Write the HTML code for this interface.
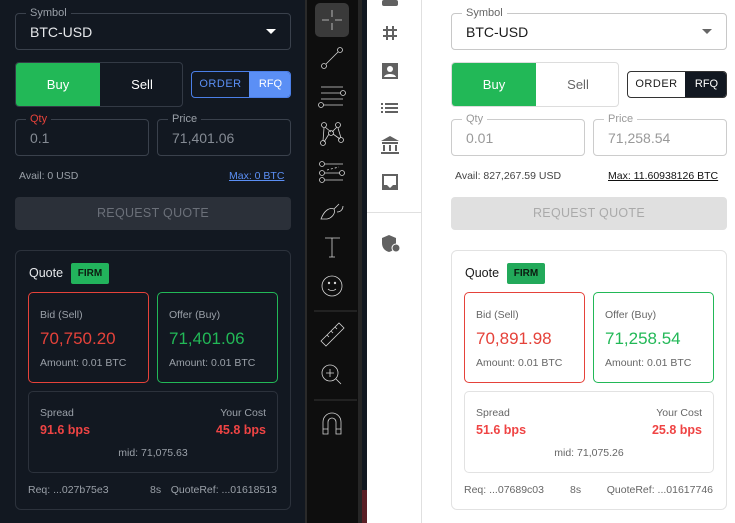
<!DOCTYPE html>
<html><head><meta charset="utf-8"><style>
*{box-sizing:border-box;margin:0;padding:0}
body{width:735px;height:523px;overflow:hidden;position:relative;font-family:"Liberation Sans",sans-serif;background:#fff}
.a{position:absolute}
.dk{left:0;top:0;width:305px;height:523px;background:#121821}
.fs{position:absolute;border-radius:4px}
.lg{position:absolute;font-size:11px;padding:0 4px;top:-7px;left:10px;line-height:13px}
.t{position:absolute;white-space:nowrap}
.s{font-size:10.5px}
</style></head><body>
<div class="a dk"></div>
<div class="fs" style="left:15px;top:13px;width:276px;height:37px;border:1px solid #3a414c"><span class="lg" style="background:#121821;color:#9aa0a8">Symbol</span><span class="t" style="left:14px;top:10px;font-size:14px;color:#e6e8eb">BTC-USD</span><span class="t" style="right:14px;top:15px;width:0;height:0;border-left:5px solid transparent;border-right:5px solid transparent;border-top:5px solid #fff"></span></div>
<div class="fs" style="left:15px;top:62px;width:168px;height:45px;border:1px solid #333a45;overflow:hidden"><div class="a" style="left:0;top:0;width:84px;height:45px;background:#22b857;color:#fff;font-size:13px;text-align:center;line-height:43px">Buy</div><div class="a" style="left:84px;top:0;width:84px;color:#fff;font-size:13px;text-align:center;line-height:43px">Sell</div></div>
<div class="fs" style="left:191px;top:71px;width:100px;height:27px;border:1px solid #4b7fe8;overflow:hidden"><div class="a" style="left:0;width:57px;line-height:25px;text-align:center;color:#5b8ff5;font-size:11px;letter-spacing:.5px">ORDER</div><div class="a" style="left:57px;width:43px;height:27px;background:#5b8ff5;line-height:25px;text-align:center;color:#fff;font-size:11px">RFQ</div></div>
<div class="fs" style="left:15px;top:119px;width:134px;height:37px;border:1px solid #3a414c"><span class="lg" style="background:#121821;color:#e5423a">Qty</span><span class="t" style="left:14px;top:10px;font-size:14px;color:#858b94">0.1</span></div>
<div class="fs" style="left:157px;top:119px;width:134px;height:37px;border:1px solid #3a414c"><span class="lg" style="background:#121821;color:#9aa0a8">Price</span><span class="t" style="left:14px;top:10px;font-size:14px;color:#858b94">71,401.06</span></div>
<span class="t s" style="left:19px;top:170px;color:#9aa0a8">Avail: 0 USD</span>
<span class="t s" style="left:229px;top:170px;color:#5b8ff5;text-decoration:underline">Max: 0 BTC</span>
<div class="fs" style="left:15px;top:197px;width:276px;height:33px;background:#2b3039;color:#6b7079;font-size:12.5px;text-align:center;line-height:33px;letter-spacing:.3px">REQUEST QUOTE</div>
<div class="fs" style="left:15px;top:250px;width:276px;height:260px;border:1px solid #2c323c;border-radius:6px">
 <span class="t" style="left:13px;top:15px;font-size:12.5px;color:#e6e8eb">Quote</span>
 <span class="t" style="left:55px;top:12px;width:38px;height:21px;background:#22b35c;color:#0c1a10;font-size:10px;font-weight:bold;text-align:center;line-height:21px;border-radius:2px">FIRM</span>
 <div class="fs" style="left:12px;top:41px;width:121px;height:91px;border:1px solid #e5423a;border-radius:5px"><span class="t s" style="left:11px;top:16px;color:#9aa0a8">Bid (Sell)</span><span class="t" style="left:11px;top:36px;font-size:17px;color:#e5423a">70,750.20</span><span class="t s" style="left:11px;top:64px;color:#9aa0a8">Amount: 0.01 BTC</span></div>
 <div class="fs" style="left:141px;top:41px;width:121px;height:91px;border:1px solid #22b857;border-radius:5px"><span class="t s" style="left:11px;top:16px;color:#9aa0a8">Offer (Buy)</span><span class="t" style="left:11px;top:36px;font-size:17px;color:#22b857">71,401.06</span><span class="t s" style="left:11px;top:64px;color:#9aa0a8">Amount: 0.01 BTC</span></div>
 <div class="fs" style="left:12px;top:140px;width:250px;height:82px;border:1px solid #2c323c;border-radius:5px"><span class="t s" style="left:11px;top:15px;color:#9aa0a8">Spread</span><span class="t s" style="right:11px;top:15px;color:#9aa0a8">Your Cost</span><span class="t" style="left:11px;top:31px;font-size:12.5px;font-weight:bold;color:#ef4444">91.6 bps</span><span class="t" style="right:11px;top:31px;font-size:12.5px;font-weight:bold;color:#ef4444">45.8 bps</span><span class="t s" style="left:0;width:248px;text-align:center;top:55px;color:#9aa0a8">mid: 71,075.63</span></div>
 <span class="t s" style="left:12px;top:233px;color:#9aa0a8">Req: ...027b75e3</span><span class="t s" style="left:134px;top:233px;color:#9aa0a8">8s</span><span class="t s" style="right:13px;top:233px;color:#9aa0a8">QuoteRef: ...01618513</span>
</div>
<div class="a" style="left:305px;top:0;width:2px;height:523px;background:#2a2a2a"></div>
<div class="a" style="left:307px;top:0;width:51px;height:523px;background:#0e0e0e"></div>
<div class="a" style="left:358px;top:0;width:4px;height:523px;background:#262626"></div>
<div class="a" style="left:362px;top:0;width:5px;height:523px;background:#121821"></div>
<div class="a" style="left:362px;top:490px;width:5px;height:33px;background:#5a1f25"></div>
<svg class="a" style="left:307px;top:0" width="51" height="523" fill="none" stroke="#d4d4d4" stroke-width="0.8">
<rect x="8" y="3" width="34" height="34" rx="5" fill="#3a3a3a" stroke="none"/>
<path d="M25 10v7M25 23v7M15 20h7M28 20h7"/>
<circle cx="17" cy="66" r="2.5"/><circle cx="33" cy="50" r="2.5"/><path d="M19 64l12-12"/>
<path d="M14 87h22M14 93h22M14 99h22M14 105h22"/><circle cx="36" cy="93" r="2.5" fill="#0e0e0e"/><circle cx="14" cy="105" r="2.5" fill="#0e0e0e"/>
<circle cx="17" cy="125" r="2.5"/><circle cx="31" cy="125" r="2.5"/><circle cx="24" cy="133" r="2.5"/><circle cx="16" cy="143" r="2.5"/><circle cx="34" cy="140" r="2.5"/><path d="M17 128l-1 13M18 127l6 5M30 127l-5 5M26 134l7 5M22 134l-5 8M31 128l3 10"/>
<circle cx="15" cy="164" r="2.5"/><circle cx="15" cy="173" r="2.5"/><circle cx="15" cy="180" r="2.5"/><circle cx="35" cy="173" r="2.5"/><path d="M18 164h18M18 180h18M18 173h15"/><path d="M20 170l12-3" stroke-dasharray="2 2"/>
<path d="M14 219c3-8 8-12 13-10c2 4-2 9-7 10zM27 209l5-5M30 212c4 0 6-3 6-6"/>
<path d="M18 238h15M25 238v19M22 257h6"/>
<circle cx="25" cy="286" r="10"/><circle cx="22" cy="283" r=".8" fill="#ddd"/><circle cx="28" cy="283" r=".8" fill="#ddd"/><path d="M21 289c2 2 6 2 8 0"/>
<path d="M7 311h43" stroke="#444"/>
<path d="M14 341l18-18l5 5l-18 18zM20 335l2 2M24 331l2 2M28 327l2 2"/>
<circle cx="23" cy="373" r="8"/><path d="M29 379l5 5M23 369v8M19 373h8"/>
<path d="M7 400h43" stroke="#444"/>
<path d="M16 434v-12a9 9 0 0 1 18 0v12h-5v-12a4 4 0 0 0-8 0v12zM16 429h5M29 429h5"/>
</svg>
<div class="a" style="left:367px;top:0;width:55px;height:523px;background:#fff;border-right:1px solid #e0e0e0"></div>
<div class="a" style="left:367px;top:212px;width:55px;height:1px;background:#e0e0e0"></div>
<svg class="a" style="left:367px;top:0" width="55" height="523" fill="#616161">
<rect x="15" y="0" width="16" height="6" rx="2"/>
<path d="M16 30h14M16 36h14M20 26v14M26 26v14" stroke="#616161" stroke-width="2" fill="none"/>
<path d="M15 63h16v16h-16z"/><circle cx="23" cy="69" r="3" fill="#fff"/><path d="M17 77c1-4 11-4 12 0z" fill="#fff"/>
<path d="M14 103h2v2h-2zM14 107h2v2h-2zM14 111h2v2h-2zM18 103h13v2h-13zM18 107h13v2h-13zM18 111h13v2h-13z"/>
<path d="M14 141l9-5 9 5zM15 142h16v2h-16zM16 145h2v6h-2zM22 145h2v6h-2zM28 145h2v6h-2zM14 152h18v2h-18z"/>
<path d="M15 174h16v16h-16z"/><path d="M17 176h12v9h-3l-3 3-3-3h-3z" fill="#fff"/>
<path d="M15 238l7-3 7 3v5c0 5-3 8-7 9c-4-1-7-4-7-9z"/><circle cx="29" cy="248" r="4" stroke="#fff" stroke-width="1"/>
</svg>
<div class="fs" style="left:451px;top:13px;width:276px;height:37px;border:1px solid #c8c8c8"><span class="lg" style="background:#fff;color:#666">Symbol</span><span class="t" style="left:14px;top:10px;font-size:14px;color:#1a1a1a">BTC-USD</span><span class="t" style="right:14px;top:15px;width:0;height:0;border-left:5px solid transparent;border-right:5px solid transparent;border-top:5px solid #666"></span></div>
<div class="fs" style="left:451px;top:62px;width:168px;height:45px;border:1px solid #ddd;overflow:hidden"><div class="a" style="left:0;top:0;width:84px;height:45px;background:#22b857;color:#fff;font-size:13px;text-align:center;line-height:43px">Buy</div><div class="a" style="left:84px;top:0;width:84px;color:#666;font-size:13px;text-align:center;line-height:43px">Sell</div></div>
<div class="fs" style="left:627px;top:71px;width:100px;height:27px;border:1px solid #333;overflow:hidden"><div class="a" style="left:0;width:57px;line-height:25px;text-align:center;color:#1a1a1a;font-size:11px;letter-spacing:.5px">ORDER</div><div class="a" style="left:57px;width:43px;height:27px;background:#121821;line-height:25px;text-align:center;color:#fff;font-size:11px">RFQ</div></div>
<div class="fs" style="left:451px;top:119px;width:134px;height:37px;border:1px solid #ccc"><span class="lg" style="background:#fff;color:#999">Qty</span><span class="t" style="left:14px;top:10px;font-size:14px;color:#999">0.01</span></div>
<div class="fs" style="left:593px;top:119px;width:134px;height:37px;border:1px solid #ccc"><span class="lg" style="background:#fff;color:#999">Price</span><span class="t" style="left:14px;top:10px;font-size:14px;color:#999">71,258.54</span></div>
<span class="t s" style="left:455px;top:170px;color:#444">Avail: 827,267.59 USD</span>
<span class="t s" style="left:608px;top:170px;color:#111;text-decoration:underline">Max: 11.60938126 BTC</span>
<div class="fs" style="left:451px;top:197px;width:276px;height:33px;background:#e0e0e0;color:#aaa;font-size:12.5px;text-align:center;line-height:33px;letter-spacing:.3px">REQUEST QUOTE</div>
<div class="fs" style="left:451px;top:250px;width:276px;height:260px;border:1px solid #e2e2e2;border-radius:6px">
 <span class="t" style="left:13px;top:15px;font-size:12.5px;color:#1a1a1a">Quote</span>
 <span class="t" style="left:55px;top:12px;width:38px;height:21px;background:#22a95a;color:#0c1a10;font-size:10px;font-weight:bold;text-align:center;line-height:21px;border-radius:2px">FIRM</span>
 <div class="fs" style="left:12px;top:41px;width:121px;height:91px;border:1px solid #e5423a;border-radius:5px"><span class="t s" style="left:11px;top:16px;color:#666">Bid (Sell)</span><span class="t" style="left:11px;top:36px;font-size:17px;color:#e5423a">70,891.98</span><span class="t s" style="left:11px;top:64px;color:#666">Amount: 0.01 BTC</span></div>
 <div class="fs" style="left:141px;top:41px;width:121px;height:91px;border:1px solid #22b857;border-radius:5px"><span class="t s" style="left:11px;top:16px;color:#666">Offer (Buy)</span><span class="t" style="left:11px;top:36px;font-size:17px;color:#22b857">71,258.54</span><span class="t s" style="left:11px;top:64px;color:#666">Amount: 0.01 BTC</span></div>
 <div class="fs" style="left:12px;top:140px;width:250px;height:82px;border:1px solid #e2e2e2;border-radius:5px"><span class="t s" style="left:11px;top:15px;color:#666">Spread</span><span class="t s" style="right:11px;top:15px;color:#666">Your Cost</span><span class="t" style="left:11px;top:31px;font-size:12.5px;font-weight:bold;color:#ef4444">51.6 bps</span><span class="t" style="right:11px;top:31px;font-size:12.5px;font-weight:bold;color:#ef4444">25.8 bps</span><span class="t s" style="left:0;width:248px;text-align:center;top:55px;color:#666">mid: 71,075.26</span></div>
 <span class="t s" style="left:12px;top:233px;color:#666">Req: ...07689c03</span><span class="t s" style="left:118px;top:233px;color:#666">8s</span><span class="t s" style="right:13px;top:233px;color:#666">QuoteRef: ...01617746</span>
</div>
</body></html>
